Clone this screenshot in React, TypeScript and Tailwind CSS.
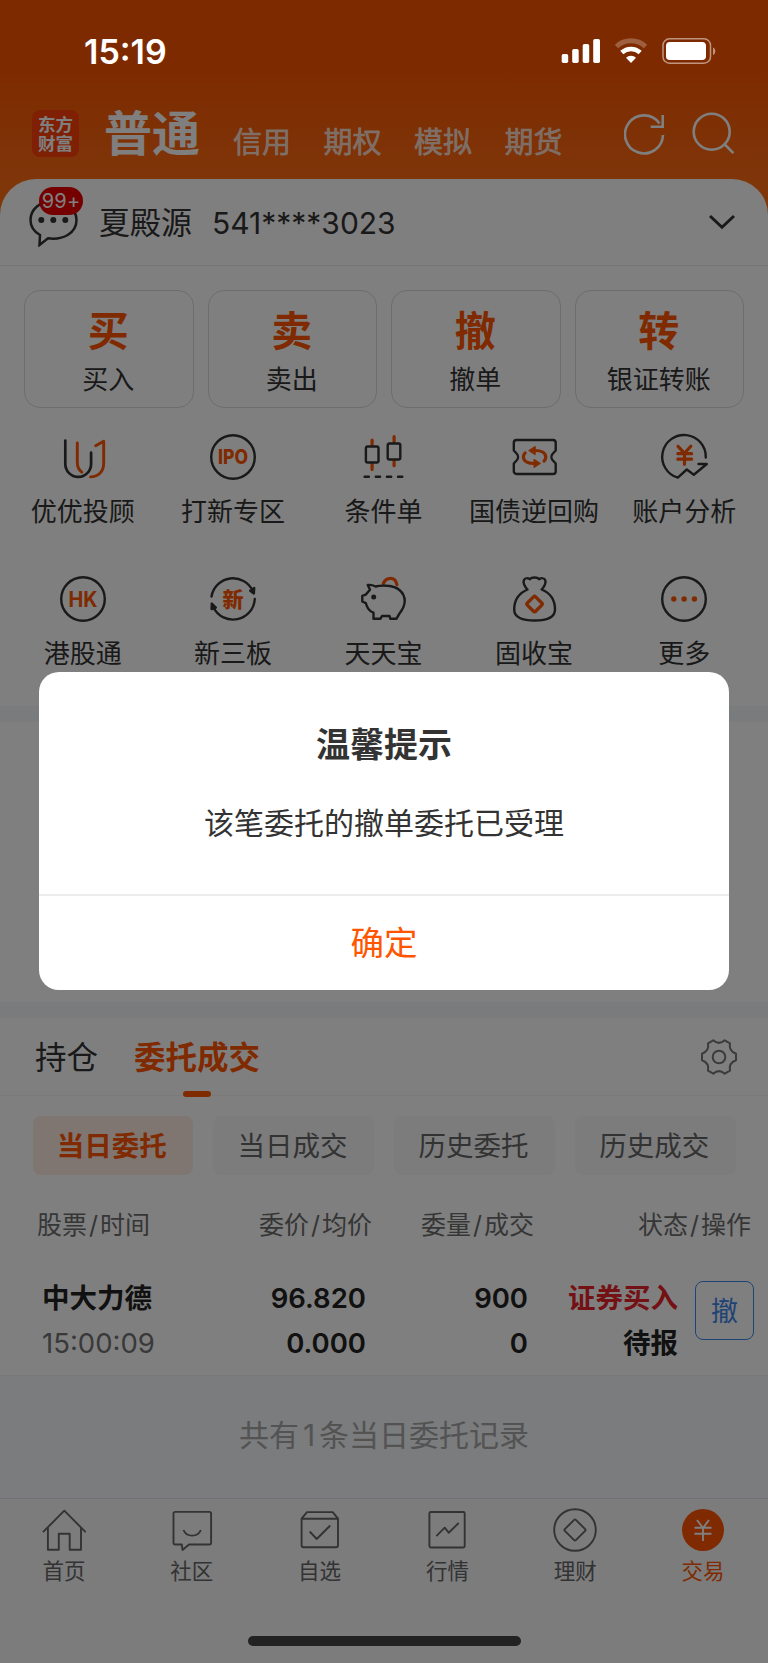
import React, { useState } from 'react';

const ink = '#333333';
const orange = '#ff5500';

const shortcuts = [
  { mark: '买', label: '买入' },
  { mark: '卖', label: '卖出' },
  { mark: '撤', label: '撤单' },
  { mark: '转', label: '银证转账' },
];

const Icon50 = ({ children }: { children: React.ReactNode }) => (
  <svg width="50" height="50" viewBox="0 0 50 50" fill="none" stroke={ink} strokeWidth="2.4" strokeLinecap="round" strokeLinejoin="round">
    {children}
  </svg>
);

const TicketArrow = () => (
  <>
    <path d="M26 18.5c6 0 10.8 2.2 10.8 6.8 0 1.6-.8 2.8-1.8 3.8" stroke={orange} strokeWidth="3.2" />
    <path d="M20 18.4l6.2-4v8z" fill={orange} stroke={orange} strokeWidth="1" />
  </>
);

const services = [
  {
    label: '优优投顾',
    icon: (
      <Icon50>
        <path d="M7.3 8.7V32a12.9 12.9 0 0 0 25.8 0V20.7" strokeWidth="2.7" />
        <path d="M19.3 11V30c0 4.5 1.5 8 4.5 10.2M37.7 13.7L45.7 9.2V31c0 8-4.7 13.7-13.2 13.9" stroke={orange} strokeWidth="2.9" />
      </Icon50>
    ),
  },
  {
    label: '打新专区',
    icon: (
      <Icon50>
        <circle cx="25" cy="25" r="21.8" />
        <text x="25" y="32" textAnchor="middle" fontSize="19.5" fontWeight="800" fill={orange} stroke="none" textLength="30" lengthAdjust="spacingAndGlyphs">IPO</text>
      </Icon50>
    ),
  },
  {
    label: '条件单',
    icon: (
      <Icon50>
        <path d="M14.1 8v5M14.1 32v5.5M36.1 4.7V10M36.1 29v4.7" stroke={orange} strokeWidth="3.2" />
        <rect x="7.9" y="14.5" width="12.6" height="16" rx="1.8" />
        <rect x="29.7" y="11.5" width="12.6" height="16" rx="1.8" />
        <path d="M6.6 44.7h4.3M17.8 44.7h4.3M28.9 44.7h4.3M40 44.7h4.3" />
      </Icon50>
    ),
  },
  {
    label: '国债逆回购',
    icon: (
      <Icon50>
        <path d="M7.5 8H44a2.7 2.7 0 0 1 2.7 2.7v7.8l-3 3.2a5 5 0 0 0 0 6.6l3 3.2v7.8A2.7 2.7 0 0 1 44 42H7.5a2.7 2.7 0 0 1-2.7-2.7v-7.8l3-3.2a5 5 0 0 0 0-6.6l-3-3.2v-7.8A2.7 2.7 0 0 1 7.5 8z" />
        <TicketArrow />
        <g transform="rotate(180 25.6 25)">
          <TicketArrow />
        </g>
      </Icon50>
    ),
  },
  {
    label: '账户分析',
    icon: (
      <Icon50>
        <path d="M46.8 25.5A21.8 21.8 0 1 0 18.8 45.7l9-8.2 7 5.2L47.8 32H39.5" />
        <path d="M19 14.3l6.5 7 6.3-7M25.5 21.5v10.8M18.8 21.7h13.8M18.8 27.2h13.8" stroke={orange} strokeWidth="3.2" />
      </Icon50>
    ),
  },
  {
    label: '港股通',
    icon: (
      <Icon50>
        <circle cx="25" cy="25" r="21.8" />
        <text x="25" y="32.5" textAnchor="middle" fontSize="21" fontWeight="700" fill={orange} stroke="none" textLength="29" lengthAdjust="spacingAndGlyphs">HK</text>
      </Icon50>
    ),
  },
  {
    label: '新三板',
    icon: (
      <Icon50>
        <path d="M3.5 22.5A21.8 21.8 0 0 1 44.8 17M46.8 25A21.8 21.8 0 0 1 5.5 33.5" />
        <path d="M46.2 14l-.3 5.5-3.7-2.7zM3.8 29.5l-.2 5.5 4.2-1.5z" fill={ink} />
        <text x="25" y="32.5" textAnchor="middle" fontSize="21" fontWeight="900" fill={orange} stroke="none">新</text>
      </Icon50>
    ),
  },
  {
    label: '天天宝',
    icon: (
      <Icon50>
        <path d="M25.3 9.5C27 5.5 30 4.3 32.5 4.3c3.6 0 5.9 2.9 6.4 6.5" stroke={orange} strokeWidth="3.2" />
        <path d="M9.7 11c3-.3 5.6.3 7.8 1.5 3-.8 8-1 12-.7C39 12.3 46.7 18 46.7 27c0 5-2.5 9-5 12.2L38.5 44.7H32.3l-.8-2.7H24l-1.5 2.7H15.5v-6C12.5 37.5 10 35 8.8 31.8L7.8 29.2 4.3 27.5V21.8l3.4-1.2 4.3-4.8z" />
        <circle cx="15.7" cy="23" r="2.5" fill={ink} stroke="none" />
      </Icon50>
    ),
  },
  {
    label: '固收宝',
    icon: (
      <Icon50>
        <path d="M18.5 15.5C16 13 13.5 8.5 15 5.8c1.2-1.8 4-1.9 6-.6 1.5-2.3 7.5-2.3 9 0 2-1.3 4.9-1.2 6.1.6 1.5 2.7-1 7.2-3.5 9.7C40 18.5 46 25 46 35.5c0 8-8 11-20.4 11S5.2 43.5 5.2 35.5C5.2 25 11.5 18.5 18.5 15.5" />
        <rect x="19.7" y="24.2" width="11.7" height="11.7" rx="1.5" transform="rotate(45 25.55 30.05)" stroke={orange} strokeWidth="3.3" />
      </Icon50>
    ),
  },
  {
    label: '更多',
    icon: (
      <Icon50>
        <circle cx="25" cy="25" r="21.8" />
        <g fill={orange} stroke="none">
          <circle cx="14.8" cy="25" r="2.7" />
          <circle cx="25.1" cy="25" r="2.7" />
          <circle cx="35.4" cy="25" r="2.7" />
        </g>
      </Icon50>
    ),
  },
];

const NavIcon = ({ children }: { children: React.ReactNode }) => (
  <svg width="44" height="44" viewBox="0 0 44 44" fill="none" stroke="#666666" strokeWidth="1.9" strokeLinejoin="round">
    {children}
  </svg>
);

const navItems = [
  {
    label: '首页',
    icon: <NavIcon><path d="M.9 24.2L22.3 2.7 43.7 24.2M5.9 19.5V41.7H16.8V25.7H27.7V41.7H39V19.5" /></NavIcon>,
  },
  {
    label: '社区',
    icon: (
      <NavIcon>
        <path d="M5.3 3.9H39.3A1.8 1.8 0 0 1 41.1 5.7V34.7A1.8 1.8 0 0 1 39.3 36.5H19L12.5 41.9 11.8 36.5H5.3A1.8 1.8 0 0 1 3.5 34.7V5.7A1.8 1.8 0 0 1 5.3 3.9z" />
        <path d="M13.5 22c3 7.5 14.3 7.5 17.3 0" />
      </NavIcon>
    ),
  },
  {
    label: '自选',
    icon: (
      <NavIcon>
        <path d="M3.6 10.7L9 4.1H34.7L40 10.7V37.2A2 2 0 0 1 38 39.2H5.6A2 2 0 0 1 3.6 37.2zM3.6 10.7H40M11.7 23.5L18.7 31 32.2 17.5" />
      </NavIcon>
    ),
  },
  {
    label: '行情',
    icon: (
      <NavIcon>
        <rect x="4.4" y="4" width="35.3" height="35.5" rx="1.5" />
        <path d="M11.3 28.2L19.7 19.7 23.7 24.7 33.7 15" />
      </NavIcon>
    ),
  },
  {
    label: '理财',
    icon: (
      <NavIcon>
        <circle cx="22" cy="22" r="20.8" />
        <rect x="14.2" y="14.2" width="15.6" height="15.6" rx="1.2" transform="rotate(45 22 22)" />
      </NavIcon>
    ),
  },
  {
    label: '交易',
    active: true,
    icon: (
      <NavIcon>
        <circle cx="22" cy="22" r="21" fill={orange} stroke="none" />
        <path d="M16 12l6 8 6-8M22 20v13M13.5 19.7h17M13.5 25.7h17" stroke="#ffffff" />
      </NavIcon>
    ),
  },
];

const StatusBar = () => (
  <div className="relative z-20 flex h-[102px] items-center justify-between pl-[84px] pr-[52px] text-white">
    <span className="pt-px text-[34px] font-semibold leading-none">15:19</span>
    <svg width="155" height="28" viewBox="0 0 155 28" fill="none">
      <g fill="#ffffff">
        <rect x=".7" y="17" width="6.5" height="9" rx="1.7" />
        <rect x="11.2" y="12" width="6.5" height="14" rx="1.7" />
        <rect x="21.7" y="7" width="6.5" height="19" rx="1.7" />
        <rect x="32.2" y="2" width="6.8" height="24" rx="1.7" />
      </g>
      <path d="M55.5 9.5a21.5 21.5 0 0 1 29 0" stroke="#ffffff" strokeOpacity=".25" strokeWidth="5" />
      <path d="M60.8 15.5a13.5 13.5 0 0 1 18.4 0" stroke="#ffffff" strokeWidth="4.5" />
      <path d="M70 26l-5-5.2a7.2 7.2 0 0 1 10 0z" fill="#ffffff" />
      <rect x="102" y="1.8" width="47.5" height="24.4" rx="6.5" stroke="#ffffff" strokeOpacity=".5" strokeWidth="1.5" />
      <rect x="105" y="5" width="40" height="18" rx="3.8" fill="#ffffff" />
      <path d="M152 10.5c3 1 3 6.5 0 7.5z" fill="#ffffff" fillOpacity=".5" />
    </svg>
  </div>
);

const Header = () => (
  <header className="h-[224px] bg-linear-to-b from-[#fc5400] from-30% to-[#ff7418]">
    <StatusBar />
    <div className="flex h-[77px] pl-8 pr-8 text-white">
      <div className="mt-2 flex size-[47px] flex-col items-center justify-center rounded-lg bg-[#ff4109] text-[17.5px] font-bold leading-[19px]">
        <span>东方</span>
        <span>财富</span>
      </div>
      <h1 className="ml-[25px] mt-2 text-[48px] font-bold leading-[48px]">普通</h1>
      <nav className="ml-[33px] mt-[26px] flex gap-[32.5px] text-[29px] leading-[30px] text-white/75 [-webkit-text-stroke:0.6px]">
        <span>信用</span>
        <span>期权</span>
        <span>模拟</span>
        <span>期货</span>
      </nav>
      <svg className="ml-auto mt-2.5" width="112" height="46" viewBox="0 0 112 46" fill="none" stroke="#ffffff" strokeWidth="2.6">
        <path d="M39 23A19 19 0 1 1 35.5 11.4" />
        <path d="M38.7 3V14.7H26.7" />
        <circle cx="87.7" cy="19.7" r="18" />
        <path d="M99.8 31.5l9.6 9.6" />
      </svg>
    </div>
  </header>
);

const AccountRow = () => (
  <div className="flex h-[87px] items-center border-b border-[#ececec] pl-[29px] pr-8 text-[#333]">
    <div className="relative h-[71px] w-[50px]">
      <svg width="50" height="60" viewBox="0 0 50 60" fill="none" stroke={ink} strokeWidth="2.5">
        <path d="M24.3 14C11 14 1.5 22.5 1.5 33c0 6.500 3.800 11.800 9.500 15l-.5 10 8.500-6.700c15.500 2 28.500-5.500 28.500-18.300C47.500 22.500 37 14 24.300 14z" />
        <g fill={ink} stroke="none">
          <circle cx="12.3" cy="33" r="3" />
          <circle cx="24.3" cy="33" r="3" />
          <circle cx="36.3" cy="33" r="3" />
        </g>
      </svg>
      <span className="absolute left-2.5 top-0 flex h-7 w-11 items-center justify-center rounded-full bg-[#ea0000] pt-px text-[20px] tracking-[0.2px] text-white">99+</span>
    </div>
    <span className="ml-5 pt-0.5 text-[31px] leading-[40px]">夏殿源</span>
    <span className="ml-5 pt-0.5 text-[30px] leading-[40px]">541****3023</span>
    <svg className="ml-auto" width="28" height="16" viewBox="0 0 28 16" fill="none" stroke={ink} strokeWidth="3">
      <path d="M2 2l12 11.3L26 2" />
    </svg>
  </div>
);

const GearIcon = () => (
  <svg width="36" height="36" viewBox="0 0 36 36" fill="none" stroke="#777777" strokeWidth="2" strokeLinejoin="round">
    <path d="M12.3 1.3Q18 6.5 23.7 1.3L29 4.3Q27.5 12 35 14.7V21.3Q27.5 24 29 31.7L23.7 34.7Q18 29.5 12.3 34.7L7 31.7Q8.5 24 1 21.3V14.7Q8.5 12 7 4.3z" />
    <circle cx="18" cy="18" r="6.3" />
  </svg>
);

const ColumnTitle = ({ left, right }: { left: string; right: string }) => (
  <div className="flex justify-end whitespace-nowrap">{left}<span className="mx-0.5">/</span>{right}</div>
);

const Orders = () => (
  <section>
    <div className="flex h-[78px] items-center border-b border-[#f4f4f4] pl-[35px] pr-[31px] text-[31.5px]">
      <span className="pt-0.5 text-[#333]">持仓</span>
      <div className="relative ml-9 flex h-full items-center pt-0.5 font-bold text-[#ff5500]">
        委托成交
        <span className="absolute bottom-[-2px] left-1/2 h-1.5 w-7 -translate-x-1/2 rounded-full bg-[#ff5500]" />
      </div>
      <span className="ml-auto pt-px"><GearIcon /></span>
    </div>

    <div className="mt-5 grid h-[59px] grid-cols-4 gap-[20.5px] px-[32.5px] text-[27.5px] text-[#666] *:flex *:items-center *:justify-center *:rounded-lg *:pr-0.5 *:pt-[3px]">
      <span className="bg-[#ffeae3] font-bold text-[#ff5500]">当日委托</span>
      <span className="bg-[#f8f8fb]">当日成交</span>
      <span className="bg-[#f8f8fb]">历史委托</span>
      <span className="bg-[#f8f8fb]">历史成交</span>
    </div>

    <div className="grid h-[100px] grid-cols-[112px_222px_162px_217px] items-center pl-[38px] pt-0.5 text-[25px] text-[#6c6c6c]">
      <ColumnTitle left="股票" right="时间" />
      <ColumnTitle left="委价" right="均价" />
      <ColumnTitle left="委量" right="成交" />
      <ColumnTitle left="状态" right="操作" />
    </div>

    <div className="flex h-[101px] border-b border-[#f0f0f0] pl-[42px] pr-3.5 pt-px text-[27.5px] font-semibold leading-[45px] text-[#222]">
      <div className="flex w-[120px] flex-col whitespace-nowrap">
        <span className="font-bold">中大力德</span>
        <span className="font-normal text-[#737373]">15:00:09</span>
      </div>
      <div className="flex w-[204px] flex-col text-right">
        <span>96.820</span>
        <span>0.000</span>
      </div>
      <div className="flex w-[162px] flex-col text-right">
        <span>900</span>
        <span>0</span>
      </div>
      <div className="flex w-[150px] flex-col text-right font-bold">
        <span className="text-[#e8232b]">证券买入</span>
        <span>待报</span>
      </div>
      <button className="ml-auto mt-[5px] size-[59px] rounded-lg border border-[#3f86e8] pt-0.5 text-[27px] font-normal leading-none text-[#3f86e8]">撤</button>
    </div>
  </section>
);

const BottomNav = () => (
  <footer className="flex h-[165px] flex-col items-center border-t border-[#e2e0ec] bg-[#f8f8fb]">
    <div className="grid w-full grid-cols-6 pr-px pt-[9px] text-[21.5px] text-[#666]">
      {navItems.map((item) => (
        <div key={item.label} className={item.active ? 'flex flex-col items-center text-[#ff5500]' : 'flex flex-col items-center'}>
          {item.icon}
          <span className="mt-[5px] leading-[28px]">{item.label}</span>
        </div>
      ))}
    </div>
    <div className="z-20 mb-[17px] mt-auto h-2.5 w-[273px] rounded-full bg-[#222]" />
  </footer>
);

const NoticeDialog = ({ onClose }: { onClose: () => void }) => (
  <div className="absolute inset-0 z-10 bg-black/50 px-[39px] pt-[671.5px]">
    <div className="flex h-[318.5px] flex-col items-center rounded-[20px] bg-white text-[#333]">
      <h2 className="mt-[51px] text-[34px] font-bold leading-[44px]">温馨提示</h2>
      <p className="mt-9 text-[30px] leading-[40px]">该笔委托的撤单委托已受理</p>
      <button onClick={onClose} className="mt-auto h-[96px] w-full border-t-2 border-[#ededed] text-[33.5px] text-[#ff5500]">确定</button>
    </div>
  </div>
);

export default function App() {
  const [showNotice, setShowNotice] = useState(true);

  return (
    <div className="relative h-[1663px] w-[768px] overflow-hidden bg-white font-['Inter','Noto_Sans_CJK_SC',sans-serif]">
      <Header />
      <main className="-mt-[45px] rounded-t-[36px] bg-white">
        <AccountRow />

        <div className="mt-6 grid grid-cols-4 gap-3.5 px-6">
          {shortcuts.map((s) => (
            <div key={s.mark} className="flex h-[118px] flex-col items-center rounded-2xl border-[1.5px] border-[#dadada]">
              <span className="mt-[19px] pr-px text-[41px] font-bold leading-[42px] text-[#ff5500]">{s.mark}</span>
              <span className="mt-3 pr-px text-[26px] leading-[32px] text-[#333]">{s.label}</span>
            </div>
          ))}
        </div>

        <div className="mt-6 grid grid-cols-5 gap-y-[46px] px-2 pb-9">
          {services.map((s) => (
            <div key={s.label} className="flex flex-col items-center gap-3.5 pr-px">
              {s.icon}
              <span className="whitespace-nowrap text-[26px] leading-[32px] text-[#333]">{s.label}</span>
            </div>
          ))}
        </div>

        <div className="h-4 bg-[#f5f7fa]" />
        <div className="h-[280px]" />
        <div className="h-4 bg-[#f5f7fa]" />

        <Orders />
        <div className="flex h-[122px] items-center justify-center bg-[#f7f8fb] pb-1 text-[30px] text-[#a6a6a6]">
          共有<span className="mx-1">1</span>条当日委托记录
        </div>
      </main>
      <BottomNav />
      {showNotice && <NoticeDialog onClose={() => setShowNotice(false)} />}
    </div>
  );
}
